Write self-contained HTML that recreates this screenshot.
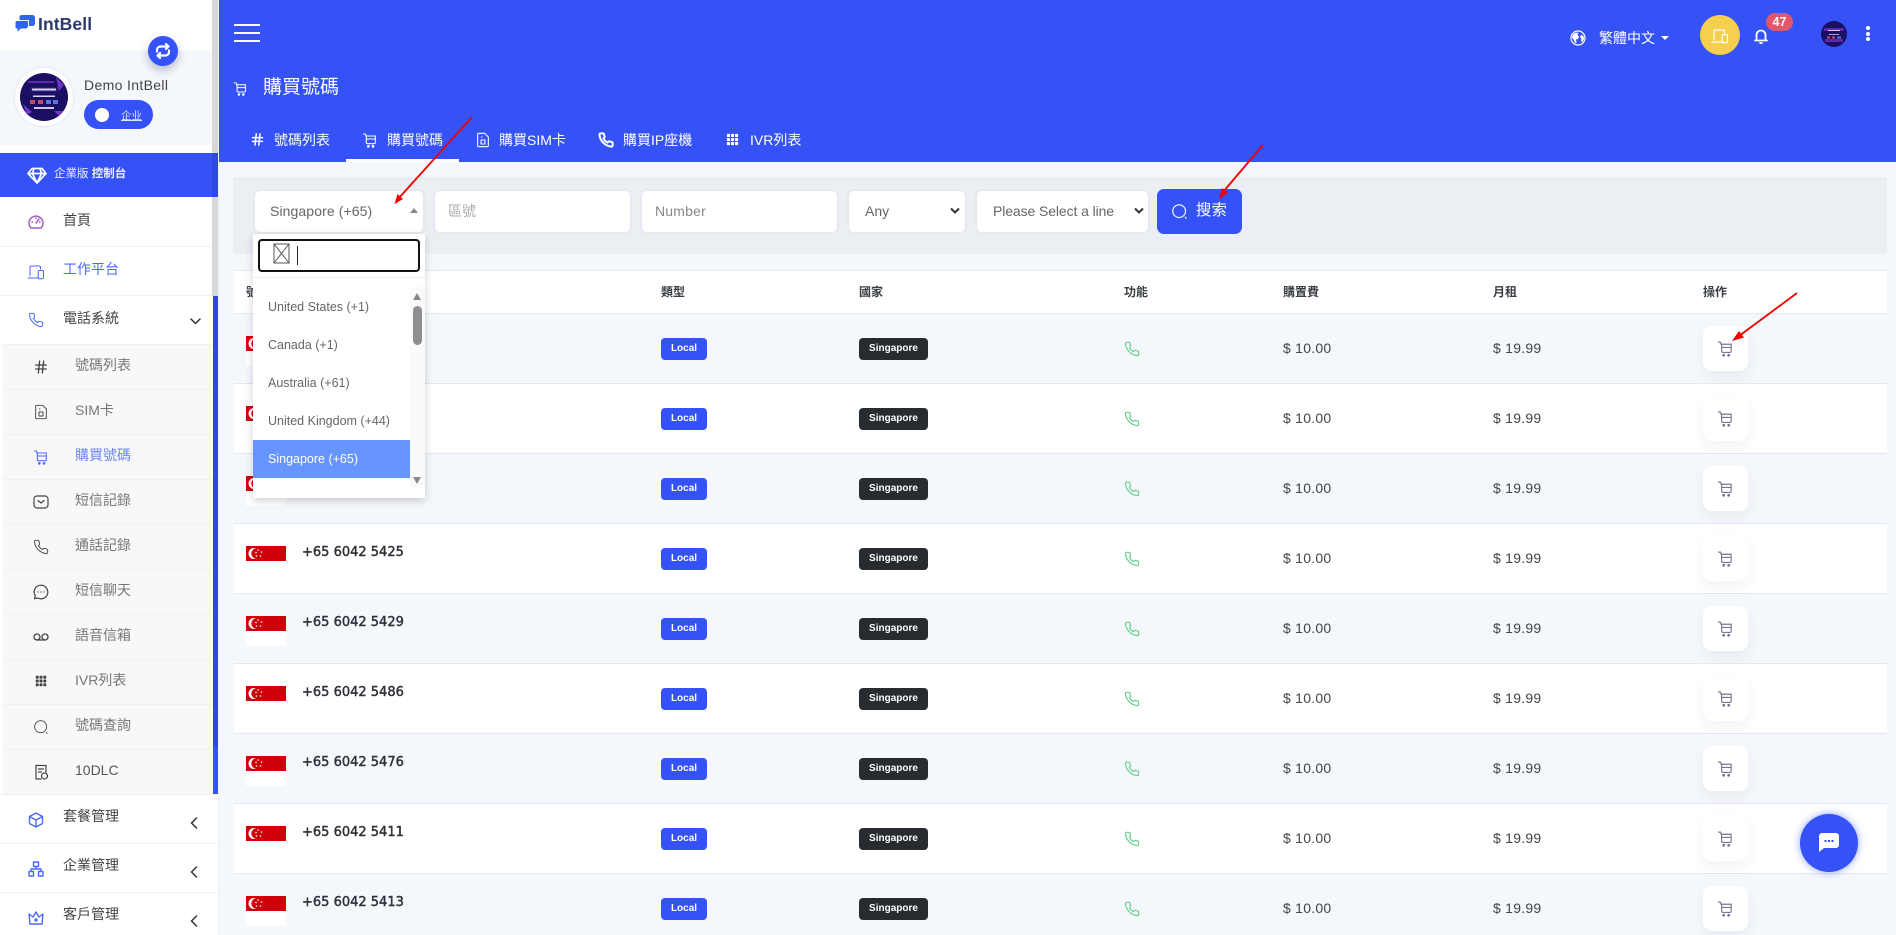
<!DOCTYPE html>
<html lang="zh-Hant"><head><meta charset="utf-8"><title>購買號碼</title>
<style>
*{box-sizing:border-box}
html,body{margin:0;padding:0;width:1896px;height:935px;overflow:hidden;background:#f4f7fb;font-family:"Liberation Sans","Noto Sans CJK TC",sans-serif;color:#444}
#w{position:relative;width:1896px;height:935px;overflow:hidden}
.a,.t,svg.i{position:absolute}
.t{white-space:nowrap;line-height:20px;font-size:14px}
svg.i{fill:none;stroke:currentColor;stroke-width:1.6;stroke-linecap:round;stroke-linejoin:round}
.sep{position:absolute;height:1px;background:#eef0f3}
.m{color:#444}.s{color:#777}
.ib{color:#4c69f6}.id{color:#444}
.row{position:absolute;left:234px;width:1653px;height:70px;border-bottom:1px solid #e3e7ee;background:#fff}
.row.o{background:#f4f7fb}
.row .fl{position:absolute;left:12px;top:22px;width:40px;height:30px}
.row .n{position:absolute;left:68px;top:19px;font:13px/20px "DejaVu Sans",sans-serif;color:#2e3138;-webkit-text-stroke:.45px #2e3138;white-space:nowrap}
.row .b{position:absolute;top:24px;height:22px;border-radius:4px;color:#fff;font-size:10px;font-weight:bold;line-height:22px;text-align:center}
.row .l{left:427px;width:46px;background:#3452f5}
.row .c{left:625px;width:69px;background:#282b30}
.row .p{position:absolute;top:24px;line-height:20px;font-size:14px;color:#444;letter-spacing:.25px}
.row .ac{position:absolute;left:1469px;top:12px;width:45px;height:45px;background:#fff;border-radius:9px;box-shadow:0 6px 14px rgba(40,50,80,.06)}
.row .ac svg{left:14px;top:14px;color:#7a7490;stroke-width:1.6}
.row .ph{left:890px;top:27px;color:#66cf8c;stroke-width:1.8}
.f{position:absolute;top:191px;height:41px;background:#fff;border-radius:5px;box-shadow:0 0 0 2px #e6e9ef;font-size:14px;line-height:41px;color:#777;white-space:nowrap}
.th{position:absolute;top:282px;font-size:12px;font-weight:bold;line-height:20px;color:#3a3d44}
.li{position:absolute;left:268px;font-size:12.5px;line-height:20px;color:#666;white-space:nowrap}
</style></head><body><div id="w">
<svg width="0" height="0" style="position:absolute"><defs>
<symbol id="cart" viewBox="0 0 24 24"><path d="M2 3h3l1.500 4v8.500a2 2 0 0 0 2 2H18a2 2 0 0 0 2-2V6H5.500M6.500 10.500H20"/><circle cx="9.500" cy="21.500" r="1.200" fill="currentColor"/><circle cx="16.500" cy="21.500" r="1.200" fill="currentColor"/></symbol>
<symbol id="phone" viewBox="0 0 24 24"><path d="M22 16.92v3a2 2 0 0 1-2.18 2 19.79 19.79 0 0 1-8.63-3.07 19.5 19.5 0 0 1-6-6 19.79 19.79 0 0 1-3.07-8.67A2 2 0 0 1 4.11 2h3a2 2 0 0 1 2 1.72 12.84 12.84 0 0 0 .7 2.81 2 2 0 0 1-.45 2.11L8.09 9.91a16 16 0 0 0 6 6l1.27-1.27a2 2 0 0 1 2.11-.45 12.84 12.84 0 0 0 2.81.7A2 2 0 0 1 22 16.92z"/></symbol>
<symbol id="sim" viewBox="0 0 24 24"><path d="M6 2h8.500L20 7.500V20a2 2 0 0 1-2 2H6a2 2 0 0 1-2-2V4a2 2 0 0 1 2-2z"/><path d="M9 12h6v6H9z"/><path d="M9.500 7.500h1"/></symbol>
<symbol id="hash" viewBox="0 0 24 24"><path d="M4 9h16M4 15h16M10 3L8 21M16 3l-2 18"/></symbol>
<symbol id="grid" viewBox="0 0 24 24"><g fill="currentColor" stroke="none"><rect x="3" y="3" width="5" height="5" rx="1"/><rect x="9.500" y="3" width="5" height="5" rx="1"/><rect x="16" y="3" width="5" height="5" rx="1"/><rect x="3" y="9.500" width="5" height="5" rx="1"/><rect x="9.500" y="9.500" width="5" height="5" rx="1"/><rect x="16" y="9.500" width="5" height="5" rx="1"/><rect x="3" y="16" width="5" height="5" rx="1"/><rect x="9.500" y="16" width="5" height="5" rx="1"/><rect x="16" y="16" width="5" height="5" rx="1"/></g></symbol>
<symbol id="search" viewBox="0 0 24 24"><circle cx="11.500" cy="11.500" r="9"/><path d="M20 20l1.500 1.500"/></symbol>
<symbol id="dev" viewBox="0 0 24 24"><path d="M4 17V6a2 2 0 0 1 2-2h10a2 2 0 0 1 2 2v2M1.500 20h13"/><rect x="15" y="10" width="7" height="11" rx="1.500"/></symbol>
<symbol id="flag" viewBox="0 0 40 30"><rect width="40" height="15" fill="#d0000b"/><rect y="15" width="40" height="15" fill="#fff"/><circle cx="8" cy="7.500" r="5.500" fill="#fff"/><circle cx="10.500" cy="7.500" r="5.200" fill="#d0000b"/><g fill="#fff"><circle cx="12" cy="4" r=".8"/><circle cx="15.500" cy="6" r=".8"/><circle cx="14.500" cy="10" r=".8"/><circle cx="10.500" cy="10" r=".8"/><circle cx="10" cy="6.500" r=".8"/></g></symbol>
</defs></svg>

<!-- MAIN HEADER -->
<div class="a" style="left:218px;top:0;width:1678px;height:162px;background:#3452f5"></div>
<div class="a" style="left:234px;top:24px;width:26px;height:2px;background:#fff"></div>
<div class="a" style="left:234px;top:32px;width:26px;height:2px;background:#fff"></div>
<div class="a" style="left:234px;top:40px;width:26px;height:2px;background:#fff"></div>
<svg class="i" style="left:233px;top:81px;color:#fff" width="15" height="15"><use href="#cart"/></svg>
<div class="t" style="left:263px;top:78px;font-size:19px;color:#fff">購買號碼</div>

<svg class="i" style="left:250px;top:132px;color:#fff;stroke-width:2.400" width="15" height="15"><use href="#hash"/></svg>
<div class="t" style="left:274px;top:130px;color:#fff">號碼列表</div>
<svg class="i" style="left:362px;top:132px;color:#fff" width="16" height="16"><use href="#cart"/></svg>
<div class="t" style="left:387px;top:130px;color:#fff">購買號碼</div>
<svg class="i" style="left:475px;top:132px;color:#fff" width="16" height="16"><use href="#sim"/></svg>
<div class="t" style="left:499px;top:130px;color:#fff">購買SIM卡</div>
<svg class="i" style="left:598px;top:132px;color:#fff;stroke-width:3" width="16" height="16"><use href="#phone"/></svg>
<div class="t" style="left:623px;top:130px;color:#fff">購買IP座機</div>
<svg class="i" style="left:725px;top:132px;color:#fff" width="15" height="15"><use href="#grid"/></svg>
<div class="t" style="left:750px;top:130px;color:#fff">IVR列表</div>
<div class="a" style="left:346px;top:159px;width:113px;height:3px;background:#fff"></div>

<!-- top right -->
<svg class="a" style="left:1570px;top:30px" width="16" height="16" viewBox="0 0 16 16"><circle cx="8" cy="8" r="7" fill="none" stroke="#fff" stroke-width="1.200"/><path d="M3 4.500l3-2 2.500.5-1 2L9 6.500 8 9 6 9.500 6.500 13 5 13 3.500 9.500 2 7.500zM11 5l2.500 1 .5 3-1.500 3-1.500-1 .5-2.500L10 7z" fill="#fff"/></svg>
<div class="t" style="left:1599px;top:28px;color:#fff">繁體中文</div>
<div class="a" style="left:1661px;top:36px;border:4px solid transparent;border-top:4px solid #fff;border-bottom:0;width:0;height:0"></div>
<div class="a" style="left:1700px;top:15px;width:40px;height:40px;border-radius:50%;background:#f7cf4f"></div>
<svg class="i" style="left:1711px;top:27px;color:#fff;stroke-width:1.600" width="18" height="18"><use href="#dev"/></svg>
<svg class="i" style="left:1754px;top:28px;color:#fff;stroke-width:1.800" width="14" height="16" viewBox="0 0 14 16"><path d="M2.500 12V7a4.500 4.500 0 0 1 9 0v5M1 12.500h12"/><path d="M6 15h2"/></svg>
<div class="a" style="left:1766px;top:13px;width:27px;height:18px;border-radius:9px;background:#e2566a;color:#fff;font-size:12.500px;font-weight:bold;line-height:18px;text-align:center">47</div>
<svg class="a" style="left:1821px;top:21px" width="26" height="26" viewBox="0 0 26 26"><circle cx="13" cy="13" r="13" fill="#1a0f62"/><path d="M3 7h20v3H3zM4 18h18v3H4z" fill="#5a2aa8"/><path d="M7 9h12v1H7zM8 13h10v.8H8z" fill="#d8d4f4"/><path d="M6 15.500h3v2H6zM11 15.500h3v2h-3z" fill="#c84c60"/><path d="M16 15.500h4v2h-4z" fill="#5878d8"/></svg>
<div class="a" style="left:1866px;top:26px;width:4px;height:4px;border-radius:50%;background:#fff"></div>
<div class="a" style="left:1866px;top:32px;width:4px;height:4px;border-radius:50%;background:#fff"></div>
<div class="a" style="left:1866px;top:37px;width:4px;height:4px;border-radius:50%;background:#fff"></div>

<!-- FILTER -->
<div class="a" style="left:233px;top:177px;width:1654px;height:77px;background:#ebeef3"></div>
<div class="f" style="left:255px;width:168px;padding-left:15px;color:#666;letter-spacing:.1px">Singapore (+65)</div>
<div class="a" style="left:410px;top:208px;border:4px solid transparent;border-bottom:5px solid #888;border-top:0;width:0;height:0"></div>
<div class="f" style="left:435px;width:195px;padding-left:13px;color:#aaa">區號</div>
<div class="f" style="left:642px;width:195px;padding-left:13px;color:#888;letter-spacing:.2px">Number</div>
<div class="f" style="left:849px;width:116px;padding-left:16px;color:#666">Any</div>
<svg class="a" style="left:950px;top:207px" width="10" height="8" viewBox="0 0 10 8"><path d="M1 1.500l4 4 4-4" fill="none" stroke="#333" stroke-width="2"/></svg>
<div class="f" style="left:977px;width:171px;padding-left:16px;color:#666;letter-spacing:-.1px">Please Select a line</div>
<svg class="a" style="left:1134px;top:207px" width="10" height="8" viewBox="0 0 10 8"><path d="M1 1.500l4 4 4-4" fill="none" stroke="#333" stroke-width="2"/></svg>
<div class="a" style="left:1157px;top:189px;width:85px;height:45px;border-radius:7px;background:#3452f5"></div>
<svg class="i" style="left:1171px;top:203px;color:#fff" width="17" height="17"><use href="#search"/></svg>
<div class="t" style="left:1196px;top:201px;color:#fff;font-size:15.500px">搜索</div>

<!-- TABLE -->
<div class="a" style="left:234px;top:270px;width:1653px;height:44px;background:#fff;border-bottom:1px solid #e3e7ee;border-top:1px solid #e3e7ee"></div>
<div class="th" style="left:246px">號碼</div>
<div class="th" style="left:661px">類型</div>
<div class="th" style="left:859px">國家</div>
<div class="th" style="left:1124px">功能</div>
<div class="th" style="left:1283px">購置費</div>
<div class="th" style="left:1493px">月租</div>
<div class="th" style="left:1703px">操作</div>

<div class="row o" style="top:314px"><svg class="fl"><use href="#flag"/></svg><div class="n">+65 6042 5401</div><div class="b l">Local</div><div class="b c">Singapore</div><svg class="i ph" width="16" height="16"><use href="#phone"/></svg><div class="p" style="left:1049px">$ 10.00</div><div class="p" style="left:1259px">$ 19.99</div><div class="ac"><svg class="i" width="17" height="17"><use href="#cart"/></svg></div></div>
<div class="row" style="top:384px"><svg class="fl"><use href="#flag"/></svg><div class="n">+65 6042 5402</div><div class="b l">Local</div><div class="b c">Singapore</div><svg class="i ph" width="16" height="16"><use href="#phone"/></svg><div class="p" style="left:1049px">$ 10.00</div><div class="p" style="left:1259px">$ 19.99</div><div class="ac"><svg class="i" width="17" height="17"><use href="#cart"/></svg></div></div>
<div class="row o" style="top:454px"><svg class="fl"><use href="#flag"/></svg><div class="n">+65 6042 5403</div><div class="b l">Local</div><div class="b c">Singapore</div><svg class="i ph" width="16" height="16"><use href="#phone"/></svg><div class="p" style="left:1049px">$ 10.00</div><div class="p" style="left:1259px">$ 19.99</div><div class="ac"><svg class="i" width="17" height="17"><use href="#cart"/></svg></div></div>
<div class="row" style="top:524px"><svg class="fl"><use href="#flag"/></svg><div class="n">+65 6042 5425</div><div class="b l">Local</div><div class="b c">Singapore</div><svg class="i ph" width="16" height="16"><use href="#phone"/></svg><div class="p" style="left:1049px">$ 10.00</div><div class="p" style="left:1259px">$ 19.99</div><div class="ac"><svg class="i" width="17" height="17"><use href="#cart"/></svg></div></div>
<div class="row o" style="top:594px"><svg class="fl"><use href="#flag"/></svg><div class="n">+65 6042 5429</div><div class="b l">Local</div><div class="b c">Singapore</div><svg class="i ph" width="16" height="16"><use href="#phone"/></svg><div class="p" style="left:1049px">$ 10.00</div><div class="p" style="left:1259px">$ 19.99</div><div class="ac"><svg class="i" width="17" height="17"><use href="#cart"/></svg></div></div>
<div class="row" style="top:664px"><svg class="fl"><use href="#flag"/></svg><div class="n">+65 6042 5486</div><div class="b l">Local</div><div class="b c">Singapore</div><svg class="i ph" width="16" height="16"><use href="#phone"/></svg><div class="p" style="left:1049px">$ 10.00</div><div class="p" style="left:1259px">$ 19.99</div><div class="ac"><svg class="i" width="17" height="17"><use href="#cart"/></svg></div></div>
<div class="row o" style="top:734px"><svg class="fl"><use href="#flag"/></svg><div class="n">+65 6042 5476</div><div class="b l">Local</div><div class="b c">Singapore</div><svg class="i ph" width="16" height="16"><use href="#phone"/></svg><div class="p" style="left:1049px">$ 10.00</div><div class="p" style="left:1259px">$ 19.99</div><div class="ac"><svg class="i" width="17" height="17"><use href="#cart"/></svg></div></div>
<div class="row" style="top:804px"><svg class="fl"><use href="#flag"/></svg><div class="n">+65 6042 5411</div><div class="b l">Local</div><div class="b c">Singapore</div><svg class="i ph" width="16" height="16"><use href="#phone"/></svg><div class="p" style="left:1049px">$ 10.00</div><div class="p" style="left:1259px">$ 19.99</div><div class="ac"><svg class="i" width="17" height="17"><use href="#cart"/></svg></div></div>
<div class="row o" style="top:874px"><svg class="fl"><use href="#flag"/></svg><div class="n">+65 6042 5413</div><div class="b l">Local</div><div class="b c">Singapore</div><svg class="i ph" width="16" height="16"><use href="#phone"/></svg><div class="p" style="left:1049px">$ 10.00</div><div class="p" style="left:1259px">$ 19.99</div><div class="ac"><svg class="i" width="17" height="17"><use href="#cart"/></svg></div></div>

<!-- DROPDOWN -->
<div class="a" style="left:253px;top:234px;width:172px;height:264px;background:#fff;box-shadow:0 3px 8px rgba(0,0,0,.18)"></div>
<div class="a" style="left:258px;top:239px;width:162px;height:33px;border:2px solid #111;border-radius:4px;background:#fff"></div>
<svg class="a" style="left:273px;top:243px" width="17" height="21" viewBox="0 0 17 21"><path d="M1 1h15v19H1zM1 1l15 19M16 1L1 20" fill="none" stroke="#555" stroke-width="1"/></svg>
<div class="a" style="left:297px;top:246px;width:1px;height:19px;background:#222"></div>
<div class="a" style="left:253px;top:277px;width:172px;height:1px;background:#eee"></div>
<div class="a" style="left:410px;top:287px;width:15px;height:201px;background:#fafafa"></div>
<div class="a" style="left:413px;top:293px;border:4.500px solid transparent;border-bottom:7px solid #888;border-top:0;width:0;height:0"></div>
<div class="a" style="left:413px;top:306px;width:9px;height:39px;border-radius:4.500px;background:#8f8f8f"></div>
<div class="a" style="left:413px;top:477px;border:4.500px solid transparent;border-top:7px solid #888;border-bottom:0;width:0;height:0"></div>
<div class="li" style="top:297px">United States (+1)</div>
<div class="li" style="top:335px">Canada (+1)</div>
<div class="li" style="top:373px">Australia (+61)</div>
<div class="li" style="top:411px">United Kingdom (+44)</div>
<div class="a" style="left:253px;top:440px;width:157px;height:38px;background:#6695ff"></div>
<div class="li" style="top:449px;color:#fff">Singapore (+65)</div>

<!-- SIDEBAR -->
<div class="a" style="left:0;top:0;width:218px;height:935px;background:#fff"></div>
<div class="a" style="left:212px;top:0;width:6px;height:296px;background:#d8d8d8"></div>
<div class="a" style="left:218px;top:0;width:1px;height:935px;background:#eef0f4"></div>
<svg class="a" style="left:14px;top:14px" width="22" height="20" viewBox="0 0 22 20"><path d="M7.500 1h11a2.500 2.500 0 0 1 2.500 2.500v6a2.500 2.500 0 0 1-2.500 2.500H8a2.500 2.500 0 0 1-2.500-2.500v-6A2 2 0 0 1 7.500 1z" fill="#2f63f2"/><path d="M3 6.500h11.500V12a3 3 0 0 1-3 3H7l-4 4v-4H3a2 2 0 0 1-2-2V8.500a2 2 0 0 1 2-2z" fill="#2f63f2" stroke="#fff" stroke-width="1"/></svg>
<div class="t" style="left:38px;top:14px;font-size:17.500px;font-weight:bold;color:#2c3b6b;letter-spacing:.1px">IntBell</div>
<div class="a" style="left:0;top:51px;width:212px;height:94px;background:#f4f7fb"></div>
<div class="a" style="left:15px;top:68px;width:58px;height:58px;border-radius:50%;background:#fff;box-shadow:0 0 3px rgba(0,0,0,.1)"></div>
<svg class="a" style="left:20px;top:73px" width="48" height="48" viewBox="0 0 48 48"><circle cx="24" cy="24" r="24" fill="#1a0f62"/><path d="M8 8h26v2H8z" fill="#5a2aa8"/><path d="M36 4l8 8-5 6zM3 31l9 8-5 3zM34 38h9l-4 5z" fill="#6d35c0"/><path d="M10 14h28v5H10z" fill="#2a1878"/><path d="M12 15.500h24v2H12zM13 22.500h22v1.500H13z" fill="#d8d4f4"/><path d="M10 27h5v4h-5zM18 27h5v4h-5z" fill="#c84c60"/><path d="M26 27h5v4h-5zM33 27h5v4h-5z" fill="#5878d8"/><path d="M14 34h20v2H14z" fill="#c8c4e8"/></svg>
<div class="a" style="left:148px;top:36px;width:30px;height:30px;border-radius:50%;background:#3452f5;box-shadow:0 4px 9px rgba(30,40,90,.3)"></div>
<svg class="i" style="left:155px;top:43px;color:#fff;stroke-width:2.200" width="16" height="16" viewBox="0 0 16 16"><path d="M2 8.500V7a3.500 3.500 0 0 1 3.500-3.500H13M11 1l2.500 2.500L11 6M14 7.500V9a3.500 3.500 0 0 1-3.500 3.500H3M5 15l-2.500-2.500L5 10"/></svg>
<div class="t" style="left:84px;top:75px;font-size:14px;color:#444;letter-spacing:.35px">Demo IntBell</div>
<div class="a" style="left:84px;top:100px;width:69px;height:29px;border-radius:15px;background:#3452f5"></div>
<div class="a" style="left:95px;top:108px;width:14px;height:14px;border-radius:50%;background:#fff"></div>
<div class="t" style="left:121px;top:106px;font-size:10.500px;color:#dfe4ff;text-decoration:underline">企业</div>

<div class="a" style="left:0;top:153px;width:218px;height:44px;background:#3452f5"></div>
<div class="a" style="left:212px;top:153px;width:6px;height:44px;background:#2f4ae0"></div>
<svg class="i" style="left:27px;top:167px;color:#fff;stroke-width:1.700" width="20" height="17" viewBox="0 0 20 17"><path d="M5 1.500h10l4 5-9 9.500-9-9.500zM1 6.500h18M7 1.500l-1.500 5L10 16l4.500-9.500L13 1.500"/></svg>
<div class="t" style="left:54px;top:164px;font-size:11.500px;color:#eef0ff">企業版 <b>控制台</b></div>

<svg class="i" style="left:28px;top:214px;color:#a25fc4;stroke-width:1.500" width="16" height="16" viewBox="0 0 16 16"><path d="M3 14a7 7 0 1 1 10 0zM8 9l3-4M4 8h.5M8 4v.5M12 8h-.5"/></svg>
<div class="t m" style="left:63px;top:210px">首頁</div>
<div class="sep" style="left:0;top:246px;width:212px"></div>
<svg class="i ib" style="left:27px;top:263px;stroke-width:1.400" width="18" height="18"><use href="#dev"/></svg>
<div class="t" style="left:63px;top:259px;color:#4c69f6">工作平台</div>
<div class="sep" style="left:0;top:295px;width:212px"></div>
<svg class="i ib" style="left:28px;top:312px;stroke-width:1.500" width="16" height="16"><use href="#phone"/></svg>
<div class="t m" style="left:63px;top:308px">電話系統</div>
<svg class="i" style="left:190px;top:318px;color:#333;stroke-width:1.500" width="11" height="7" viewBox="0 0 11 7"><path d="M1 1l4.500 4.500L10 1"/></svg>

<div class="a" style="left:3px;top:344px;width:210px;height:450px;background:#f8f8f8"></div>
<div class="a" style="left:213px;top:296px;width:5px;height:451px;background:#2f49df"></div>
<div class="a" style="left:213px;top:747px;width:5px;height:47px;background:#3452f5"></div>
<div class="sep" style="left:3px;top:344px;width:210px"></div>
<div class="sep" style="left:3px;top:389px;width:210px"></div>
<div class="sep" style="left:3px;top:434px;width:210px"></div>
<div class="sep" style="left:3px;top:479px;width:210px"></div>
<div class="sep" style="left:3px;top:524px;width:210px"></div>
<div class="sep" style="left:3px;top:569px;width:210px"></div>
<div class="sep" style="left:3px;top:614px;width:210px"></div>
<div class="sep" style="left:3px;top:659px;width:210px"></div>
<div class="sep" style="left:3px;top:704px;width:210px"></div>
<div class="sep" style="left:3px;top:749px;width:210px"></div>

<svg class="i id" style="left:33px;top:359px;stroke-width:2" width="16" height="16"><use href="#hash"/></svg>
<div class="t s" style="left:75px;top:355px">號碼列表</div>
<svg class="i id" style="left:33px;top:404px;stroke-width:1.400" width="16" height="16"><use href="#sim"/></svg>
<div class="t s" style="left:75px;top:400px">SIM卡</div>
<svg class="i" style="left:33px;top:449px;color:#4c69f6" width="16" height="16"><use href="#cart"/></svg>
<div class="t" style="left:75px;top:445px;color:#6b84f8">購買號碼</div>
<svg class="i id" style="left:33px;top:494px;stroke-width:1.200" width="16" height="16" viewBox="0 0 16 16"><rect x="1" y="2" width="14" height="12" rx="3"/><path d="M5 6.500l3 2.500 3-2.500"/></svg>
<div class="t s" style="left:75px;top:490px">短信記錄</div>
<svg class="i id" style="left:33px;top:539px;stroke-width:1.400" width="16" height="16"><use href="#phone"/></svg>
<div class="t s" style="left:75px;top:535px">通話記錄</div>
<svg class="i id" style="left:33px;top:584px;stroke-width:1.200" width="16" height="16" viewBox="0 0 16 16"><path d="M8 1.200a6.800 6.800 0 1 1-3.400 12.700L1.500 14.800l.8-3A6.800 6.800 0 0 1 8 1.200z"/><path d="M5 8h.1M8 8h.1M11 8h.1"/></svg>
<div class="t s" style="left:75px;top:580px">短信聊天</div>
<svg class="i id" style="left:33px;top:629px;stroke-width:1.300" width="16" height="16" viewBox="0 0 16 16"><circle cx="4" cy="8" r="3"/><circle cx="12" cy="8" r="3"/><path d="M4 11h8"/></svg>
<div class="t s" style="left:75px;top:625px">語音信箱</div>
<svg class="i id" style="left:34px;top:674px" width="14" height="14"><use href="#grid"/></svg>
<div class="t s" style="left:75px;top:670px">IVR列表</div>
<svg class="i id" style="left:33px;top:719px;stroke-width:1.300" width="16" height="16"><use href="#search"/></svg>
<div class="t s" style="left:75px;top:715px">號碼查詢</div>
<svg class="i id" style="left:34px;top:764px;stroke-width:1.200" width="14" height="16" viewBox="0 0 14 16"><path d="M7 15H2V1.500h10V8M4.500 5h5M4.500 8h3"/><circle cx="10.500" cy="12" r="3"/></svg>
<div class="t" style="left:75px;top:760px;color:#555">10DLC</div>

<div class="sep" style="left:0;top:794px;width:218px"></div>
<svg class="i ib" style="left:28px;top:812px;stroke-width:1.400" width="16" height="16" viewBox="0 0 16 16"><path d="M8 1l6.500 3.500v7L8 15l-6.500-3.500v-7zM1.500 4.500L8 8l6.500-3.500M8 8v7"/></svg>
<div class="t m" style="left:63px;top:806px">套餐管理</div>
<svg class="i" style="left:190px;top:817px;color:#333;stroke-width:1.500" width="8" height="12" viewBox="0 0 8 12"><path d="M6.500 1L1.500 6l5 5"/></svg>
<div class="sep" style="left:0;top:843px;width:218px"></div>
<svg class="i ib" style="left:28px;top:861px;stroke-width:1.400" width="16" height="16" viewBox="0 0 16 16"><rect x="5.500" y="1" width="5" height="4.500"/><rect x="1" y="10.500" width="4.500" height="4.500"/><rect x="10.500" y="10.500" width="4.500" height="4.500"/><path d="M8 5.500V8M3 10.500V8h10v2.500"/></svg>
<div class="t m" style="left:63px;top:855px">企業管理</div>
<svg class="i" style="left:190px;top:866px;color:#333;stroke-width:1.500" width="8" height="12" viewBox="0 0 8 12"><path d="M6.500 1L1.500 6l5 5"/></svg>
<div class="sep" style="left:0;top:892px;width:218px"></div>
<svg class="i ib" style="left:28px;top:910px;stroke-width:1.400" width="16" height="16" viewBox="0 0 16 16"><path d="M2 14L1 4l4 3 3-5 3 5 4-3-1 10z"/><circle cx="8" cy="10" r="1"/></svg>
<div class="t m" style="left:63px;top:904px">客戶管理</div>
<svg class="i" style="left:190px;top:915px;color:#333;stroke-width:1.500" width="8" height="12" viewBox="0 0 8 12"><path d="M6.500 1L1.500 6l5 5"/></svg>

<!-- CHAT -->
<div class="a" style="left:1800px;top:814px;width:58px;height:58px;border-radius:50%;background:#3452f5;box-shadow:0 0 8px rgba(52,82,245,.55)"></div>
<svg class="a" style="left:1819px;top:832px" width="20" height="20" viewBox="0 0 20 20"><path d="M3 1h14a3 3 0 0 1 3 3v9a3 3 0 0 1-3 3H5l-5 4V4a3 3 0 0 1 3-3z" fill="#fff"/><path d="M5.500 8h2v2h-2zM9 8h2v2H9zM12.500 8h2v2h-2z" fill="#3452f5"/></svg>

<!-- ARROWS -->
<svg class="a" style="left:0;top:0;pointer-events:none" width="1896" height="935" viewBox="0 0 1896 935"><g stroke="#f00000" stroke-width="1.800" fill="#f00000"><path d="M472 117L398 199" fill="none"/><path d="M394.500 204l3-10 5.500 5z" stroke="none"/><path d="M1263 145L1223 192" fill="none"/><path d="M1219 199l3-11 6 5z" stroke="none"/><path d="M1797 293L1739 336" fill="none"/><path d="M1732 341l7-10 5 6.500z" stroke="none"/></g></svg>
</div></body></html>
